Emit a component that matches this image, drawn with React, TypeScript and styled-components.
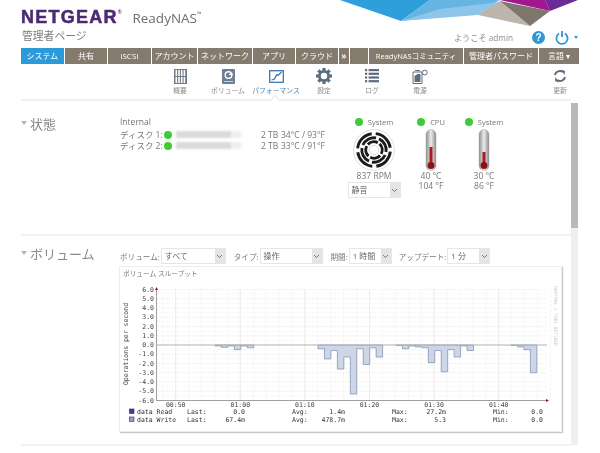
import styled, { createGlobalStyle } from "styled-components";

const GlobalStyle = createGlobalStyle`
    html, body {
        margin: 0;
        background: #fff;
    }
    body {
        width: 600px;
        height: 453px;
        overflow: hidden;
        font-family: "Open Sans", "Noto Sans CJK JP", sans-serif;
        color: #777;
    }
`;

const Page = styled.div`
    position: relative;
    width: 600px;
    height: 453px;
    overflow: hidden;
    filter: blur(0.3px);
`;

const BannerArt = styled.svg`
    position: absolute;
    top: 0;
    left: 0;
`;

const Header = styled.header`
    position: relative;
    display: flex;
    justify-content: space-between;
    height: 48px;
    padding: 0 21px;
`;

const Brand = styled.div`
    display: flex;
    flex-direction: column;
`;

const LogoRow = styled.div`
    display: flex;
    align-items: baseline;
    height: 27px;
    padding-top: 7px;
    box-sizing: border-box;
`;

const Logo = styled.span`
    font-family: "Liberation Sans", sans-serif;
    font-size: 18px;
    line-height: 20px;
    font-weight: 700;
    letter-spacing: 1.25px;
    color: #4b2a72;
    -webkit-text-stroke: 0.5px #4b2a72;
`;

const Registered = styled.sup`
    font-size: 5px;
    line-height: 0;
    -webkit-text-stroke: 0;
    vertical-align: 9px;
    letter-spacing: 0;
`;

const Product = styled.span`
    margin-left: 11px;
    font-size: 13.5px;
    line-height: 20px;
    color: #6d6d6d;
`;

const Trade = styled.sup`
    font-size: 6px;
    line-height: 0;
    vertical-align: 7px;
`;

const AdminTitle = styled.div`
    font-size: 10.8px;
    line-height: 18px;
    color: #7c7c7c;
    margin-left: 1px;
`;

const UserBox = styled.div`
    display: flex;
    align-items: center;
    height: 18px;
    margin-top: 28px;
    margin-right: 1px;
`;

const Welcome = styled.span`
    font-size: 8.2px;
    color: #8c8c8c;
    margin-right: 19px;
`;

const HelpBadge = styled.span`
    width: 13px;
    height: 13px;
    border-radius: 50%;
    background: #2b98d8;
    color: #fff;
    font: 700 10px/13px "Liberation Sans", sans-serif;
    text-align: center;
    margin-right: 10px;
`;

const MiniCaret = styled.span`
    width: 0;
    height: 0;
    margin-left: 5px;
    border: 2.5px solid transparent;
    border-top: 3px solid #2b98d8;
    border-bottom: 0;
`;

const TabBar = styled.nav`
    position: relative;
    display: flex;
    gap: 1px;
    height: 16px;
    margin-left: 21px;
`;

const Tab = styled.div<{ $w: number; $active?: boolean; $small?: boolean; $bold?: boolean }>`
    width: ${(p) => p.$w}px;
    height: 16px;
    background: ${(p) => (p.$active ? "#2b9ad8" : "#857a6e")};
    color: #fff;
    font-size: ${(p) => (p.$small ? 7.5 : 8)}px;
    font-weight: ${(p) => (p.$bold ? 700 : 400)};
    line-height: 16px;
    text-align: center;
    white-space: nowrap;
    overflow: hidden;
`;

const SubNav = styled.div`
    display: flex;
    height: 35px;
    padding: 3px 16px 0 156px;
    box-sizing: border-box;
`;

const SubItem = styled.div<{ $active?: boolean; $push?: boolean }>`
    position: relative;
    display: flex;
    flex-direction: column;
    align-items: center;
    width: 48px;
    margin-left: ${(p) => (p.$push ? "auto" : "0")};
    font-size: 6.8px;
    line-height: 10px;
    white-space: nowrap;
    color: ${(p) => (p.$active ? "#3f84bd" : "#8a8a8a")};

    ${(p) =>
        p.$active &&
        `&::after {
            content: "";
            position: absolute;
            left: 20px;
            bottom: -3px;
            width: 5px;
            height: 5px;
            background: #fff;
            border-left: 1px solid #e6e6e6;
            border-top: 1px solid #e6e6e6;
            transform: rotate(45deg);
            z-index: 1;
        }`}
`;

const SubIcon = styled.div`
    display: flex;
    align-items: center;
    justify-content: center;
    height: 18px;
    margin-bottom: 1px;
`;

const Body = styled.div`
    display: flex;
    height: 354px;
`;

const Content = styled.main`
    width: 550px;
    margin-left: 21px;
    border-top: 2px solid #f0f0f0;
`;

const ScrollTrack = styled.div`
    width: 7px;
    height: 342px;
    margin-top: 4px;
    background: #efefef;
`;

const ScrollThumb = styled.div`
    height: 125px;
    background: #b9b9b9;
`;

const Section = styled.section<{ $h: number }>`
    position: relative;
    display: flex;
    height: ${(p) => p.$h}px;
    box-sizing: border-box;
    border-bottom: 2px solid #f2f2f2;
`;

const SectionHead = styled.h2<{ $top: number }>`
    display: flex;
    align-items: center;
    gap: 3px;
    width: 99px;
    height: 18px;
    margin: ${(p) => p.$top}px 0 0;
    font-size: 13px;
    font-weight: 400;
    color: #8a8a8a;
    white-space: nowrap;
`;

const Disclosure = styled.span`
    width: 0;
    height: 0;
    border: 3px solid transparent;
    border-top: 4px solid #b5b5b5;
    border-bottom: 0;
`;

const StatusBody = styled.div`
    display: flex;
    padding-top: 15px;
`;

const DiskBlock = styled.div`
    width: 227px;
    font-size: 8.5px;
    line-height: 11px;
`;

const DiskGroup = styled.div`
    height: 13px;
    color: #777;
`;

const DiskRow = styled.div`
    display: flex;
    align-items: center;
    height: 11px;
    white-space: nowrap;
`;

const DiskName = styled.span`
    width: 44px;
`;

const Led = styled.span`
    flex: none;
    width: 8px;
    height: 8px;
    border-radius: 50%;
    background: #3ecb36;
`;

const Masked = styled.span`
    width: 65px;
    height: 7px;
    margin: 0 20px 0 4px;
    background: linear-gradient(90deg, #dadada 0 84%, #efefef 84% 100%);
    filter: blur(0.8px);
`;

const DiskSize = styled.span`
    width: 20px;
`;

const Sensor = styled.div<{ $w: number; $gap?: number }>`
    display: flex;
    flex-direction: column;
    align-items: center;
    width: ${(p) => p.$w}px;
    margin-left: ${(p) => p.$gap ?? 0}px;
    font-size: 8.5px;
    line-height: 10px;
    text-align: center;
`;

const SensorHead = styled.div`
    display: flex;
    align-items: center;
    gap: 5px;
    height: 11px;
    margin-bottom: 2px;
    font-size: 7.5px;
`;

const FanSelect = styled.div`
    margin-top: 1px;
`;

const Dropdown = styled.div<{ $w: number }>`
    display: flex;
    flex: none;
    width: ${(p) => p.$w}px;
    height: 16px;
    box-sizing: border-box;
    border: 1px solid #e6e6e6;
    font-size: 8px;
    line-height: 14px;
    color: #666;
    text-align: left;
`;

const DropdownText = styled.span`
    flex: 1;
    padding-left: 3px;
    white-space: nowrap;
`;

const DropdownArrow = styled.span`
    display: flex;
    align-items: center;
    justify-content: center;
    width: 10px;
    background: #e4e4e4;
`;

const VolumeBody = styled.div`
    padding-top: 12px;
`;

const Filters = styled.div`
    display: flex;
    align-items: center;
    height: 16px;
    margin-bottom: 3px;
    font-size: 7.6px;
    color: #777;
`;

const FilterLabel = styled.span<{ $gap: number }>`
    margin-left: ${(p) => p.$gap}px;
    margin-right: 1px;
    white-space: nowrap;
`;

const ChartCard = styled.div`
    width: 441px;
    height: 164px;
    background: #fff;
    box-shadow: 0 0 0 1px #ececec, 1px 1px 1px 1px #c8c8c8;
`;

const ChartTitle = styled.div`
    height: 18px;
    padding-left: 3px;
    font-size: 6.7px;
    line-height: 14px;
    color: #777;
`;

const ChartSvg = styled.svg`
    display: block;
    font-family: "DejaVu Sans Mono", monospace;
    font-size: 6.5px;
`;

const tabs: [string, number][] = [
    ["システム", 43],
    ["共有", 42],
    ["iSCSI", 43],
    ["アカウント", 45],
    ["ネットワーク", 54],
    ["アプリ", 42],
    ["クラウド", 42],
    ["»", 10],
    ["", 18],
    ["ReadyNASコミュニティ", 94],
    ["管理者パスワード", 74],
    ["言語 ▾", 40],
];

const Chevron = () => (
    <svg width="7" height="5" viewBox="0 0 7 5">
        <path d="M1 1l2.5 2.5L6 1" fill="none" stroke="#777" strokeWidth="1" />
    </svg>
);

const Select = ({ w, label }: { w: number; label: string }) => (
    <Dropdown $w={w}>
        <DropdownText>{label}</DropdownText>
        <DropdownArrow>
            <Chevron />
        </DropdownArrow>
    </Dropdown>
);

const PowerIcon = () => (
    <svg width="14" height="15" viewBox="0 0 14 15">
        <path d="M4 3.6a5.6 5.6 0 1 0 6 0" fill="none" stroke="#2b98d8" strokeWidth="1.8" />
        <path d="M7 1v6" stroke="#2b98d8" strokeWidth="1.8" />
    </svg>
);

const OverviewIcon = () => (
    <svg width="13" height="15" viewBox="0 0 13 15">
        <rect width="13" height="15" fill="#6f7b88" />
        {[1.5, 4.2, 6.9, 9.6].map((x) =>
            [1, 8].map((y) => <rect key={x + "-" + y} x={x} y={y} width="1.6" height="6" fill="#fff" />)
        )}
    </svg>
);

const VolumeIcon = () => (
    <svg width="13" height="15" viewBox="0 0 13 15">
        <rect width="13" height="15" rx="1" fill="#6c7f95" />
        <circle cx="6.5" cy="6" r="4" fill="#fff" />
        <circle cx="6.5" cy="6" r="2.6" fill="#6c7f95" />
        <path d="M6.5 6h4v-2h-2z" fill="#fff" />
        <rect x="2" y="12" width="9" height="1" fill="#c9d1da" />
    </svg>
);

const PerfIcon = () => (
    <svg width="15" height="13" viewBox="0 0 15 13">
        <rect x="0.7" y="0.7" width="13.6" height="11.6" fill="#fff" stroke="#3c78ae" strokeWidth="1.3" />
        <path d="M2.5 10l3-1 2-4 2 0 3-3" fill="none" stroke="#3c78ae" strokeWidth="1.3" />
    </svg>
);

const GearIcon = () => (
    <svg width="16" height="16" viewBox="0 0 16 16">
        <circle cx="8" cy="8" r="4.6" fill="none" stroke="#5d6d7e" strokeWidth="2.8" />
        {[0, 45, 90, 135, 180, 225, 270, 315].map((a) => (
            <rect key={a} x="6.4" y="0" width="3.2" height="3" fill="#5d6d7e" transform={`rotate(${a} 8 8)`} />
        ))}
    </svg>
);

const LogIcon = () => (
    <svg width="14" height="14" viewBox="0 0 14 14">
        {[0, 3.7, 7.4, 11.1].map((y) => (
            <g key={y} fill="#5d6d7e">
                <rect x="0" y={y} width="2.2" height="2.2" />
                <rect x="3.6" y={y} width="10.4" height="2.2" />
            </g>
        ))}
    </svg>
);

const PowerDocIcon = () => (
    <svg width="16" height="15" viewBox="0 0 16 15">
        <path d="M1 3h9v11.5H1z" fill="#fff" stroke="#5d6d7e" strokeWidth="1" />
        <path d="M3 1.5h5" stroke="#5d6d7e" strokeWidth="1" />
        <path d="M2.5 7l3-2h3v8h-6z" fill="#5d6d7e" />
        <circle cx="12.8" cy="3.5" r="2.4" fill="#fff" stroke="#5d6d7e" strokeWidth="1" />
    </svg>
);

const RefreshIcon = () => (
    <svg width="12" height="14" viewBox="0 0 12 14">
        <path d="M1 6a5 4.5 0 0 1 8-3" fill="none" stroke="#5d6d7e" strokeWidth="2" />
        <path d="M7 0.5l4 1.5-0.500 4z" fill="#5d6d7e" />
        <path d="M11 8a5 4.5 0 0 1-8 3" fill="none" stroke="#5d6d7e" strokeWidth="2" />
        <path d="M5 13.5l-4-1.500 0.500-4z" fill="#5d6d7e" />
    </svg>
);

const FanIcon = () => (
    <svg width="42" height="42" viewBox="-22 -22 44 44">
        <circle r="21.4" fill="#fff" stroke="#cfcfcf" strokeWidth="0.7" />
        {[
            [17.2, 0],
            [12.8, 18],
            [8.6, 36],
        ].map(([r, spin]) => (
            <circle
                key={r}
                r={r}
                fill="none"
                stroke="#1b1b1b"
                strokeWidth="3"
                pathLength={100}
                strokeDasharray="21 4"
                transform={`rotate(${spin + 6})`}
            />
        ))}
        <circle r="5" fill="#fff" stroke="#d0d0d0" strokeWidth="0.8" />
    </svg>
);

const Thermometer = ({ id, top }: { id: string; top: number }) => (
    <svg width="12" height="42" viewBox="0 0 12 42">
        <defs>
            <linearGradient id={id} x1="0" x2="1" y1="0" y2="0">
                <stop offset="0" stopColor="#8e8e8e" />
                <stop offset="0.5" stopColor="#ececec" />
                <stop offset="1" stopColor="#8a8a8a" />
            </linearGradient>
        </defs>
        <rect x="1" y="0.5" width="10" height="41" rx="5" fill={`url(#${id})`} stroke="#aaa" strokeWidth="0.5" />
        <rect x="4.5" y={top} width="3" height={37 - top} fill="#a81c22" />
        <circle cx="6" cy="36.5" r="3.4" fill="#8e1015" />
    </svg>
);

const xMajor = [176.7, 241.3, 305.9, 370.5, 435.1, 499.7];
const xMinor = Array.from({ length: 31 }, (_, i) => 163.8 + i * 12.92);
const yLines = Array.from({ length: 25 }, (_, i) => 288.5 + i * 4.625);
const yLabels = ["6.0", "5.0", "4.0", "3.0", "2.0", "1.0", "0.0", "-1.0", "-2.0", "-3.0", "-4.0", "-5.0", "-6.0"];

// x start, then the value of each 6.46px step
const series: [number, number[]][] = [
    [216, [-0.1, -0.25, -0.1, -0.5, -0.1, -0.3]],
    [319, [-0.4, -1.5, -0.6, -2.6, -1.3, -5.3, -0.4, -2.1, -0.3, -1.3]],
    [397, [-0.05, -0.4, -0.1, -0.2, -0.3, -1.9, -0.6, -2.9, -0.5, -1.3, -0.1, -0.6]],
    [512, [-0.05, -0.2, -0.5, -3]],
];

const stepPath = (x0: number, values: number[]) => {
    const pts = values
        .map((v, i) => {
            const y = 344 - v * 9.25;
            return `L${x0 + i * 6.46} ${y}L${x0 + (i + 1) * 6.46} ${y}`;
        })
        .join("");
    return `M${x0} 344${pts}L${x0 + values.length * 6.46} 344Z`;
};

const legendRows = [
    { name: "data Read", y: 413, color: "#3d3d9c", last: "0.0", avg: "1.4m", max: "27.2m", min: "0.0" },
    { name: "data Write", y: 421, color: "#8fa3c4", last: "67.4m", avg: "478.7m", max: "5.3", min: "0.0" },
];

const Chart = () => (
    <ChartSvg width="441" height="146" viewBox="121 284 441 146">
        {yLines.map((y, i) => (
            <line
                key={y}
                x1="158"
                x2="548"
                y1={y}
                y2={y}
                stroke={i % 2 ? "#f2f2f2" : "#efe9e9"}
                strokeWidth="0.8"
                strokeDasharray="1.5 1"
            />
        ))}
        {xMinor.map((x) => (
            <line key={x} x1={x} x2={x} y1="288" y2="399" stroke="#f0f0f0" strokeWidth="0.8" strokeDasharray="1.5 1" />
        ))}
        {xMajor.map((x) => (
            <line key={x} x1={x} x2={x} y1="288" y2="399" stroke="#ede6e6" strokeWidth="0.8" />
        ))}
        {series.map(([x0, values]) => (
            <path key={x0} d={stepPath(x0, values)} fill="#cdd6e6" stroke="#8496b4" strokeWidth="0.8" />
        ))}
        <line x1="158" x2="548" y1="344" y2="344" stroke="#b5b5b5" strokeWidth="1" />
        <line x1="157.5" x2="157.5" y1="288" y2="399" stroke="#888" strokeWidth="0.8" />
        <line x1="157" x2="548" y1="399.5" y2="399.5" stroke="#888" strokeWidth="0.8" />
        <path d="M156 289l1.5-3 1.5 3z" fill="#8e1a2a" />
        <path d="M547 398l3 1.5-3 1.5z" fill="#8e1a2a" />
        {yLabels.map((t, i) => (
            <text key={t} x="155" y={290.5 + i * 9.25} textAnchor="end" fill="#444">
                {t}
            </text>
        ))}
        <text x="129" y="343" textAnchor="middle" fill="#444" transform="rotate(-90 129 343)">
            Operations per second
        </text>
        <text x="555" y="315" textAnchor="middle" fill="#c8c8c8" fontSize="4.5" transform="rotate(90 555 315)">
            RRDTOOL / TOBI OETIKER
        </text>
        {["00:50", "01:00", "01:10", "01:20", "01:30", "01:40"].map((t, i) => (
            <text key={t} x={xMajor[i]} y="405.5" textAnchor="middle" fill="#444">
                {t}
            </text>
        ))}
        {legendRows.map((r) => (
            <g key={r.name} fill="#333">
                <rect x="130.5" y={r.y - 5} width="4.5" height="4.5" fill={r.color} stroke="#333" strokeWidth="0.6" />
                <text x="138" y={r.y}>{r.name}</text>
                <text x="188" y={r.y}>Last:</text>
                <text x="246" textAnchor="end" y={r.y}>{r.last}</text>
                <text x="293" y={r.y}>Avg:</text>
                <text x="346" textAnchor="end" y={r.y}>{r.avg}</text>
                <text x="393" y={r.y}>Max:</text>
                <text x="447" textAnchor="end" y={r.y}>{r.max}</text>
                <text x="494" y={r.y}>Min:</text>
                <text x="544" textAnchor="end" y={r.y}>{r.min}</text>
            </g>
        ))}
    </ChartSvg>
);

export default function App() {
    return (
        <Page>
            <GlobalStyle />
            <BannerArt width="600" height="30" viewBox="0 0 600 30">
                <path d="M340 0L401 21L430 0Z" fill="#2f9fdc" />
                <path d="M430 0L401 21L478 12L500 0Z" fill="#67b4e2" />
                <path d="M401 21L478 15L500 2L440 9Z" fill="#8ec6ea" />
                <path d="M478 15L530 26L500 1Z" fill="#bdb4ab" />
                <path d="M500 1L530 26L550 11Z" fill="#7f766d" />
                <path d="M500 0L550 11L545 0Z" fill="#a1178e" />
                <path d="M545 0L550 11L578 0Z" fill="#6a2a97" />
            </BannerArt>
            <Header>
                <Brand>
                    <LogoRow>
                        <Logo>
                            NETGEAR<Registered>®</Registered>
                        </Logo>
                        <Product>
                            ReadyNAS<Trade>™</Trade>
                        </Product>
                    </LogoRow>
                    <AdminTitle>管理者ページ</AdminTitle>
                </Brand>
                <UserBox>
                    <Welcome>ようこそ admin</Welcome>
                    <HelpBadge>?</HelpBadge>
                    <PowerIcon />
                    <MiniCaret />
                </UserBox>
            </Header>
            <TabBar>
                {tabs.map(([label, w], i) => (
                    <Tab key={i} $w={w} $active={i === 0} $small={i === 9} $bold={i === 7}>
                        {label}
                    </Tab>
                ))}
            </TabBar>
            <SubNav>
                <SubItem>
                    <SubIcon><OverviewIcon /></SubIcon>
                    概要
                </SubItem>
                <SubItem>
                    <SubIcon><VolumeIcon /></SubIcon>
                    ボリューム
                </SubItem>
                <SubItem $active>
                    <SubIcon><PerfIcon /></SubIcon>
                    パフォーマンス
                </SubItem>
                <SubItem>
                    <SubIcon><GearIcon /></SubIcon>
                    設定
                </SubItem>
                <SubItem>
                    <SubIcon><LogIcon /></SubIcon>
                    ログ
                </SubItem>
                <SubItem>
                    <SubIcon><PowerDocIcon /></SubIcon>
                    電源
                </SubItem>
                <SubItem $push>
                    <SubIcon><RefreshIcon /></SubIcon>
                    更新
                </SubItem>
            </SubNav>
            <Body>
                <Content>
                    <Section $h={135}>
                        <SectionHead $top={13}>
                            <Disclosure />
                            状態
                        </SectionHead>
                        <StatusBody>
                            <DiskBlock>
                                <DiskGroup>Internal</DiskGroup>
                                <DiskRow>
                                    <DiskName>ディスク 1:</DiskName>
                                    <Led />
                                    <Masked />
                                    <DiskSize>2 TB</DiskSize>
                                    34°C / 93°F
                                </DiskRow>
                                <DiskRow>
                                    <DiskName>ディスク 2:</DiskName>
                                    <Led />
                                    <Masked />
                                    <DiskSize>2 TB</DiskSize>
                                    33°C / 91°F
                                </DiskRow>
                            </DiskBlock>
                            <Sensor $w={54}>
                                <SensorHead><Led />System</SensorHead>
                                <FanIcon />
                                837 RPM
                                <FanSelect>
                                    <Select w={53} label="静音" />
                                </FanSelect>
                            </Sensor>
                            <Sensor $w={40} $gap={10}>
                                <SensorHead><Led />CPU</SensorHead>
                                <Thermometer id="thermoCpu" top={18} />
                                <span>40 °C</span>
                                <span>104 °F</span>
                            </Sensor>
                            <Sensor $w={40} $gap={13}>
                                <SensorHead><Led />System</SensorHead>
                                <Thermometer id="thermoSys" top={23} />
                                <span>30 °C</span>
                                <span>86 °F</span>
                            </Sensor>
                        </StatusBody>
                    </Section>
                    <Section $h={210}>
                        <SectionHead $top={8}>
                            <Disclosure />
                            ボリューム
                        </SectionHead>
                        <VolumeBody>
                            <Filters>
                                <FilterLabel $gap={0}>ボリューム:</FilterLabel>
                                <Select w={65} label="すべて" />
                                <FilterLabel $gap={8}>タイプ:</FilterLabel>
                                <Select w={63} label="操作" />
                                <FilterLabel $gap={8}>期間:</FilterLabel>
                                <Select w={43} label="1 時間" />
                                <FilterLabel $gap={7}>アップデート:</FilterLabel>
                                <Select w={43} label="1 分" />
                            </Filters>
                            <ChartCard>
                                <ChartTitle>ボリューム スループット</ChartTitle>
                                <Chart />
                            </ChartCard>
                        </VolumeBody>
                    </Section>
                </Content>
                <ScrollTrack>
                    <ScrollThumb />
                </ScrollTrack>
            </Body>
        </Page>
    );
}
